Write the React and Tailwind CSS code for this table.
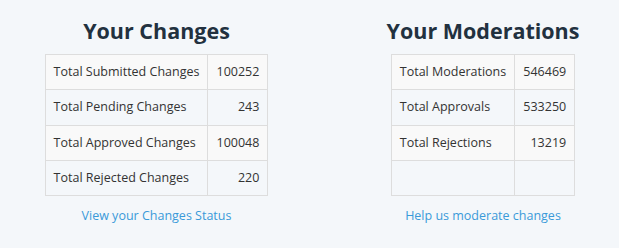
export default function App() {
  const left = [
    ["Total Submitted Changes", "100252"],
    ["Total Pending Changes", "243"],
    ["Total Approved Changes", "100048"],
    ["Total Rejected Changes", "220"],
  ];
  const right = [
    ["Total Moderations", "546469"],
    ["Total Approvals", "533250"],
    ["Total Rejections", "13219"],
    ["", ""],
  ];
  const Table = ({ rows, c1 }) => (
    <table className="border-collapse text-[12.5px] leading-[18px] text-[#333]">
      <tbody>
        {rows.map(([a, b], i) => (
          <tr key={i} className={i % 2 === 0 ? "bg-[#f9f9f9]" : ""}>
            <td className={`border border-[#dddddd] px-2 h-[35.3px] whitespace-nowrap ${c1}`}>{a}</td>
            <td className="border border-[#dddddd] px-2 h-[35.3px] w-[60px] text-right">{b}</td>
          </tr>
        ))}
      </tbody>
    </table>
  );
  return (
    <div className="w-[619px] h-[248px] bg-[#f4f7fa] flex font-['Open_Sans',sans-serif]">
      <div className="w-[313px] flex flex-col items-center pt-[14px]">
        <h2 className="text-[21.5px] leading-[34px] font-bold text-[#22313f] mb-[6px]">Your Changes</h2>
        <Table rows={left} c1="w-[161px]" />
        <a className="mt-[11px] text-[12.5px] leading-[18px] text-[#3a9ad9]" href="#">View your Changes Status</a>
      </div>
      <div className="w-[306px] pl-[34px] flex flex-col items-center pt-[14px]">
        <h2 className="text-[21.5px] leading-[34px] font-bold text-[#22313f] mb-[6px]">Your Moderations</h2>
        <Table rows={right} c1="w-[122px]" />
        <a className="mt-[11px] text-[12.5px] leading-[18px] text-[#3a9ad9]" href="#">Help us moderate changes</a>
      </div>
    </div>
  );
}
